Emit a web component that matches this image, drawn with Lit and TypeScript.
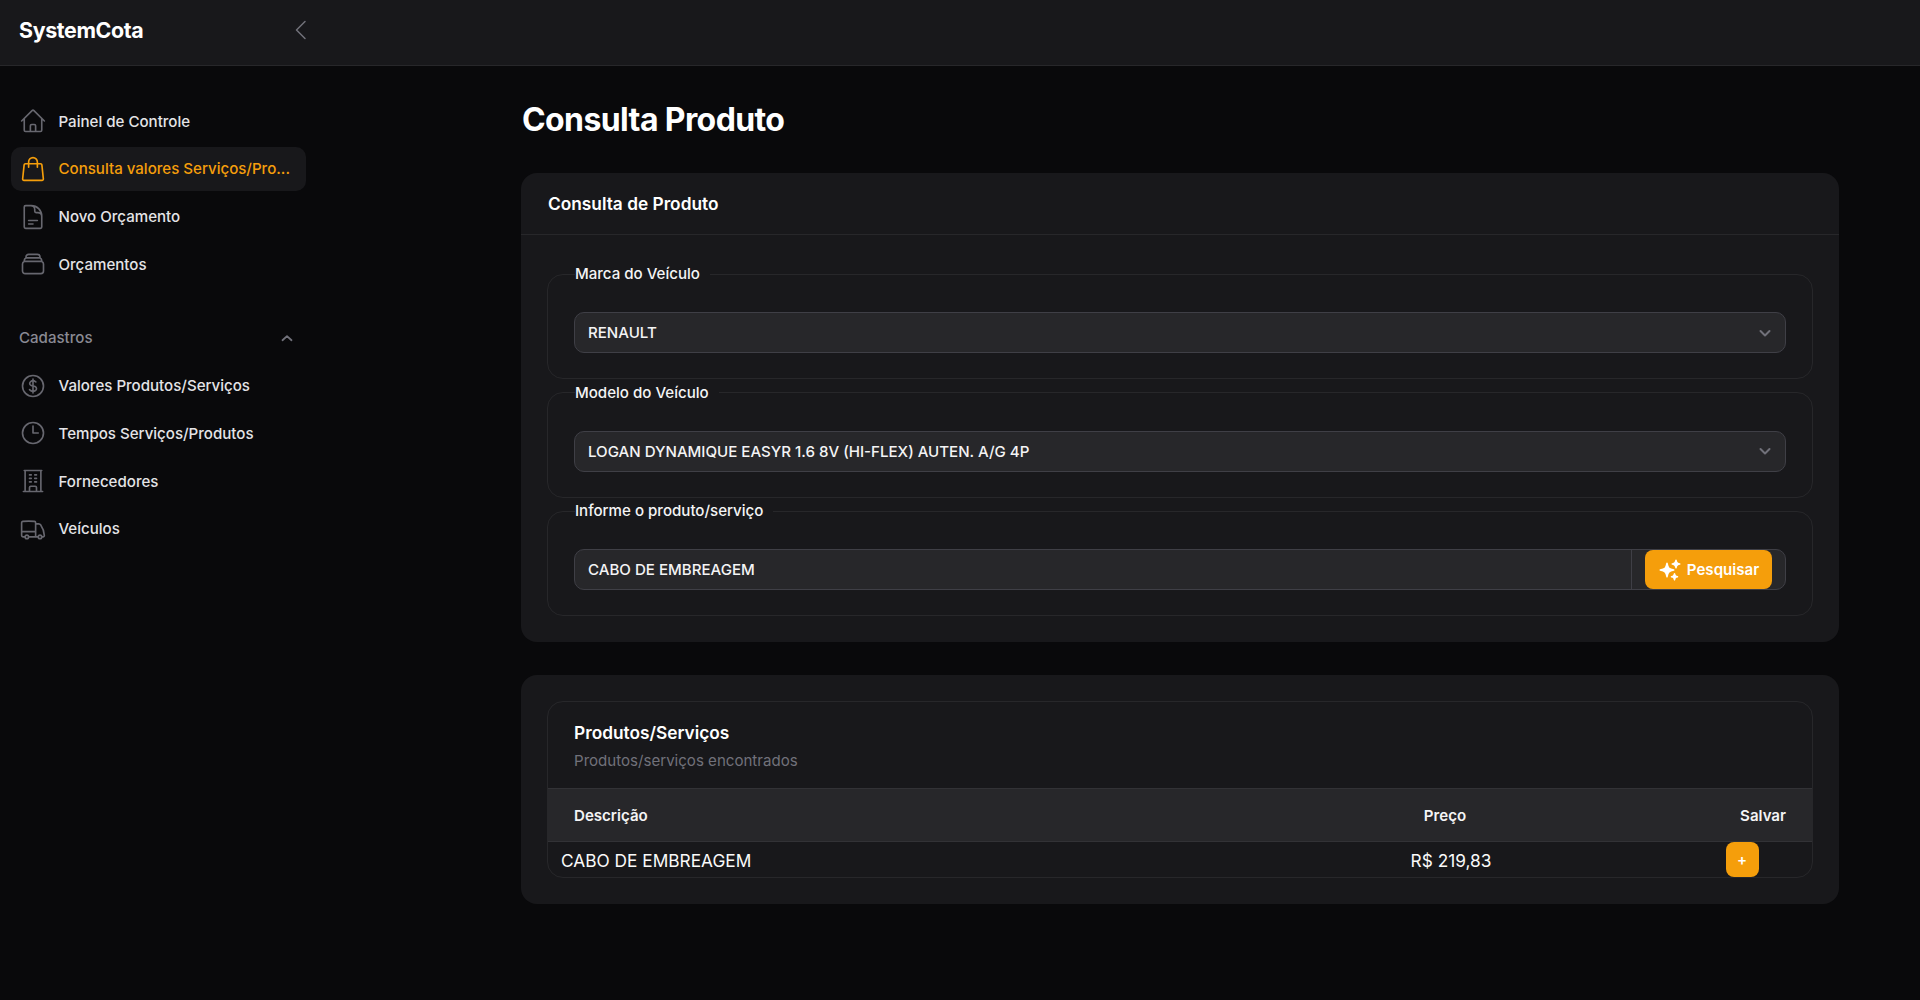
import { LitElement, html, css, svg } from "lit";
import { customElement } from "lit/decorators.js";

const ic = (d: unknown) => html`<svg class="ic" viewBox="0 0 24 24" fill="none" stroke="currentColor" stroke-width="1.4" stroke-linecap="round" stroke-linejoin="round">${d}</svg>`;
const p = (d: string) => svg`<path d=${d}></path>`;

const HOME = p("M2.25 12l8.954-8.955c.44-.439 1.152-.439 1.591 0L21.75 12M4.5 9.75v10.125c0 .621.504 1.125 1.125 1.125H9.75v-4.875c0-.621.504-1.125 1.125-1.125h2.25c.621 0 1.125.504 1.125 1.125V21h4.125c.621 0 1.125-.504 1.125-1.125V9.75M8.25 21h8.25");
const BAG = p("M15.75 10.5V6a3.75 3.75 0 10-7.5 0v4.5m11.356-1.993l1.263 12c.07.665-.45 1.243-1.119 1.243H4.25a1.125 1.125 0 01-1.12-1.243l1.264-12A1.125 1.125 0 015.513 7.5h12.974c.576 0 1.059.435 1.119 1.007z");
const DOC = p("M19.5 14.25v-2.625a3.375 3.375 0 00-3.375-3.375h-1.5A1.125 1.125 0 0113.5 7.125v-1.5a3.375 3.375 0 00-3.375-3.375H8.25m0 12.75h7.5m-7.5 3H12M10.5 2.25H5.625c-.621 0-1.125.504-1.125 1.125v17.25c0 .621.504 1.125 1.125 1.125h12.75c.621 0 1.125-.504 1.125-1.125V11.25a9 9 0 00-9-9z");
const STACK = p("M6 6.878V6a2.25 2.25 0 012.25-2.25h7.5A2.25 2.25 0 0118 6v.878m-12 0c.235-.083.487-.128.75-.128h10.5c.263 0 .515.045.75.128m-12 0A2.25 2.25 0 004.5 9v.878m13.5-3A2.25 2.25 0 0119.5 9v.878m0 0a2.246 2.246 0 00-.75-.128H5.25c-.263 0-.515.045-.75.128m15 0A2.25 2.25 0 0121 12v6a2.25 2.25 0 01-2.25 2.25H5.25A2.25 2.25 0 013 18v-6c0-.98.626-1.813 1.5-2.122");
const DOLLAR = p("M12 6v12m-3-2.818l.879.659c1.171.879 3.07.879 4.242 0 1.172-.879 1.172-2.303 0-3.182C13.536 12.219 12.768 12 12 12c-.725 0-1.45-.22-2.003-.659-1.106-.879-1.106-2.303 0-3.182s2.9-.879 4.006 0l.415.33M21 12a9 9 0 11-18 0 9 9 0 0118 0z");
const CLOCK = p("M12 6v6h4.5m4.5 0a9 9 0 11-18 0 9 9 0 0118 0z");
const OFFICE = p("M3.75 21h16.5M4.5 3h15M5.25 3v18m13.5-18v18M9 6.75h1.5m-1.5 3h1.5m-1.5 3h1.5m3-6H15m-1.5 3H15m-1.5 3H15M9 21v-3.375c0-.621.504-1.125 1.125-1.125h3.75c.621 0 1.125.504 1.125 1.125V21");
const TRUCK = p("M8.25 18.75a1.5 1.5 0 01-3 0m3 0a1.5 1.5 0 00-3 0m3 0h6m-9 0H3.375a1.125 1.125 0 01-1.125-1.125V14.25m17.25 4.5a1.5 1.5 0 01-3 0m3 0a1.5 1.5 0 00-3 0m3 0h1.125c.621 0 1.129-.504 1.09-1.124a17.902 17.902 0 00-3.213-9.193 2.056 2.056 0 00-1.58-.86H14.25M16.5 18.75h-2.25m0-11.177v-.958c0-.568-.422-1.048-.987-1.106a48.554 48.554 0 00-10.026 0 1.106 1.106 0 00-.987 1.106v7.635m12-6.677v6.677m0 4.5v-4.5m0 0h-12");
const SPARK = "M9 4.5a.75.75 0 01.721.544l.813 2.846a3.75 3.75 0 002.576 2.576l2.846.813a.75.75 0 010 1.442l-2.846.813a3.75 3.75 0 00-2.576 2.576l-.813 2.846a.75.75 0 01-1.442 0l-.813-2.846a3.75 3.75 0 00-2.576-2.576l-2.846-.813a.75.75 0 010-1.442l2.846-.813A3.75 3.75 0 007.466 7.89l.813-2.846A.75.75 0 019 4.5zM18 1.5a.75.75 0 01.728.568l.258 1.036c.236.94.97 1.674 1.91 1.91l1.036.258a.75.75 0 010 1.456l-1.036.258c-.94.236-1.674.97-1.91 1.91l-.258 1.036a.75.75 0 01-1.456 0l-.258-1.036a2.625 2.625 0 00-1.91-1.91l-1.036-.258a.75.75 0 010-1.456l1.036-.258a2.625 2.625 0 001.91-1.91l.258-1.036A.75.75 0 0118 1.5zM16.5 15a.75.75 0 01.712.513l.394 1.183c.15.447.5.799.948.948l1.183.395a.75.75 0 010 1.422l-1.183.395c-.447.15-.799.5-.948.948l-.395 1.183a.75.75 0 01-1.422 0l-.395-1.183a1.5 1.5 0 00-.948-.948l-1.183-.395a.75.75 0 010-1.422l1.183-.395c.447-.15.799-.5.948-.948l.395-1.183A.75.75 0 0116.5 15z";

const chev = html`<svg class="chev" viewBox="0 0 20 20" fill="none" stroke="currentColor" stroke-width="2" stroke-linecap="round" stroke-linejoin="round"><path d="M5.5 8l4.5 4.5L14.5 8"></path></svg>`;

@customElement("app-root")
export class AppRoot extends LitElement {
  static styles = css`
    :host { display: block; min-height: 1000px; background: #09090b; color: #fff; font-family: Inter, "Liberation Sans", sans-serif; font-size: 15.08px; }
    * { box-sizing: border-box; }
    .top { height: 66px; background: #18181b; border-bottom: 1px solid #27272a; display: flex; align-items: center; padding-bottom: 5px; }
    .brand { width: 313px; padding-left: 19px; display: flex; align-items: center; justify-content: space-between; }
    .logo { font-size: 21.4px; font-weight: 700; letter-spacing: -0.37px; }
    .collapse { width: 24px; height: 24px; color: #71717a; }
    .body { display: flex; align-items: flex-start; }
    .side { width: 290px; flex: none; padding: 33.3px 0 0 11px; font-weight: 500; }
    .nav { display: flex; flex-direction: column; width: 295px; gap: 3.7px; }
    .item { height: 44px; display: flex; align-items: center; gap: 12px; padding-left: 7.5px; border-radius: 10px; color: #e4e4e7; white-space: nowrap; }
    .item.on { background: #18181b; color: #f59e0b; }
    .item.on .ic { color: #f59e0b; }
    .ic { width: 28px; height: 28px; flex: none; color: #67676f; }
    .section { height: 40px; margin: 27.5px 0 2.5px; display: flex; align-items: center; justify-content: space-between; padding: 0 10px 0 8px; color: #8a8a93; }
    .section svg { width: 18px; height: 18px; color: #71717a; }
    .main { flex: 1; padding: 32px 81px 0 231px; }
    h1 { margin: 0 0 31px; font-size: 32px; line-height: 44px; font-weight: 700; letter-spacing: -0.6px; padding-left: 1px; }
    .card { background: #18181b; border-radius: 16px; margin-bottom: 33px; }
    .card-h { height: 62px; padding: 0 27px; display: flex; align-items: center; font-size: 17.3px; font-weight: 600; border-bottom: 1px solid #27272a; }
    .card-b { padding: 29px 26px 26px; display: flex; flex-direction: column; gap: 3.5px; }
    fieldset { margin: 0; padding: 28px 26px 25px; border: 1px solid #27272a; border-radius: 16px; min-width: 0; }
    legend { margin-left: 1px; padding: 0 10px 0 0; height: 20px; line-height: 20px; font-weight: 500; color: #f4f4f5; }
    .sel { height: 41px; background: #27272a; border: 1px solid #3f3f46; border-radius: 10px; display: flex; align-items: center; justify-content: space-between; padding: 0 10px 0 13px; font-weight: 500; color: #f4f4f5; }
    .chev { width: 20px; height: 20px; color: #71717a; }
    .group { height: 41px; background: #27272a; border: 1px solid #3f3f46; border-radius: 10px; display: flex; align-items: center; font-weight: 500; color: #f4f4f5; }
    .group .val { flex: 1; padding-left: 13px; height: 100%; display: flex; align-items: center; border-right: 1px solid #3f3f46; }
    .group .rest { width: 153px; display: flex; justify-content: flex-end; padding-right: 13px; height: 100%; align-items: center; }
    .search { width: 127px; height: 39px; border: 0; border-radius: 8px; background: #f59e0b; color: #fff; display: flex; align-items: center; justify-content: center; gap: 5px; font: inherit; font-weight: 600; padding: 0; }
    .search svg { width: 24px; height: 24px; fill: #fff; flex: none; }
    .card-2 { padding: 26px; }
    .panel { border: 1px solid #27272a; border-radius: 16px; overflow: hidden; }
    .ph { height: 86px; padding: 18px 26px 0; }
    .ph h3 { margin: 0; font-size: 17.3px; line-height: 26px; font-weight: 600; }
    .ph p { margin: 4px 0 0; line-height: 22px; color: #71717a; }
    .thead, .row { display: grid; grid-template-columns: 1fr 438px 142px; align-items: center; }
    .thead { height: 54px; background: #27272a; border-top: 1px solid #323236; border-bottom: 1px solid #323236; padding-left: 26px; font-weight: 600; color: #f4f4f5; }
    .thead .c { text-align: center; padding-right: 12px; }
    .thead .r { text-align: right; padding-right: 26px; }
    .row { height: 35px; padding-left: 13px; font-size: 17.3px; color: #fafafa; }
    .row .t { padding-top: 1px; }
    .row .c { text-align: center; }
    .add { display: block; margin: 0 auto; width: 33px; height: 35px; border: 0; border-radius: 8px; background: #f59e0b; color: #fff; font: 600 15px Inter, sans-serif; padding: 0; transform: translateX(1px); }
  `;

  private item(icon: unknown, label: string, on = false) {
    return html`<div class="item ${on ? "on" : ""}">${ic(icon)}<span>${label}</span></div>`;
  }

  render() {
    return html`
      <header class="top">
        <div class="brand">
          <span class="logo">SystemCota</span>
          <svg class="collapse" viewBox="0 0 24 24" fill="none" stroke="currentColor" stroke-width="1.5" stroke-linecap="round" stroke-linejoin="round"><path d="M16 3.5l-8.5 8.5 8.5 8.5"></path></svg>
        </div>
      </header>
      <div class="body">
        <aside class="side">
          <nav class="nav">
            ${this.item(HOME, "Painel de Controle")}
            ${this.item(BAG, "Consulta valores Serviços/Pro...", true)}
            ${this.item(DOC, "Novo Orçamento")}
            ${this.item(STACK, "Orçamentos")}
            <div class="section">
              <span>Cadastros</span>
              <svg viewBox="0 0 20 20" fill="none" stroke="currentColor" stroke-width="2" stroke-linecap="round" stroke-linejoin="round"><path d="M5 12.5L10 8l5 4.5"></path></svg>
            </div>
            ${this.item(DOLLAR, "Valores Produtos/Serviços")}
            ${this.item(CLOCK, "Tempos Serviços/Produtos")}
            ${this.item(OFFICE, "Fornecedores")}
            ${this.item(TRUCK, "Veículos")}
          </nav>
        </aside>
        <main class="main">
          <h1>Consulta Produto</h1>
          <section class="card">
            <div class="card-h">Consulta de Produto</div>
            <div class="card-b">
              <fieldset>
                <legend>Marca do Veículo</legend>
                <div class="sel"><span>RENAULT</span>${chev}</div>
              </fieldset>
              <fieldset>
                <legend>Modelo do Veículo</legend>
                <div class="sel"><span>LOGAN DYNAMIQUE EASYR 1.6 8V (HI-FLEX) AUTEN. A/G 4P</span>${chev}</div>
              </fieldset>
              <fieldset>
                <legend>Informe o produto/serviço</legend>
                <div class="group">
                  <div class="val">CABO DE EMBREAGEM</div>
                  <div class="rest">
                    <button class="search"><svg viewBox="0 0 24 24"><path d=${SPARK}></path></svg>Pesquisar</button>
                  </div>
                </div>
              </fieldset>
            </div>
          </section>
          <section class="card card-2">
            <div class="panel">
              <div class="ph">
                <h3>Produtos/Serviços</h3>
                <p>Produtos/serviços encontrados</p>
              </div>
              <div class="thead"><span>Descrição</span><span class="c">Preço</span><span class="r">Salvar</span></div>
              <div class="row"><span class="t">CABO DE EMBREAGEM</span><span class="t c">R$ 219,83</span><span><button class="add">+</button></span></div>
            </div>
          </section>
        </main>
      </div>
    `;
  }
}
